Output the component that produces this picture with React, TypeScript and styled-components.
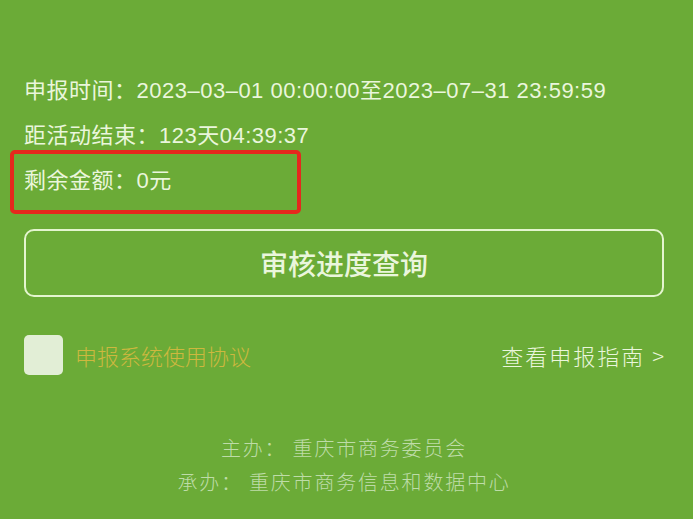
import React from "react";
import styled, {createGlobalStyle} from "styled-components";

const GlobalStyle = createGlobalStyle`
  html, body {
    margin: 0;
    padding: 0;
    background: #6bab37;
  }
  body {
    font-family: "Liberation Sans", "Noto Sans CJK SC", sans-serif;
  }
`;

const Page = styled.div`
  width: 693px;
  height: 519px;
  box-sizing: border-box;
  background: #6bab37;
  padding: 76px 29px 0 24px;
  display: flex;
  flex-direction: column;
  position: relative;
  overflow: hidden;
`;

const InfoList = styled.div`
  display: flex;
  flex-direction: column;
  gap: 15px;
`;

const InfoLine = styled.div`
  color: #eaf6dc;
  font-size: 22px;
  line-height: 30px;
  white-space: nowrap;
  letter-spacing: 0.5px;
`;

const Highlight = styled.div`
  position: absolute;
  left: 10px;
  top: 150px;
  width: 291px;
  height: 64px;
  box-sizing: border-box;
  border: 4px solid #e5281d;
  border-radius: 5px;
`;

const QueryButton = styled.button`
  margin-top: 33px;
  height: 68px;
  width: 640px;
  box-sizing: border-box;
  background: transparent;
  border: 2px solid #e4f5cf;
  border-radius: 10px;
  color: #eaf6dc;
  font-family: "Noto Sans CJK SC", sans-serif;
  font-size: 28px;
  font-weight: 500;
  padding: 0;
`;

const AgreementRow = styled.div`
  margin-top: 38px;
  display: flex;
  align-items: center;
  justify-content: space-between;
  width: 640px;
`;

const Agree = styled.label`
  display: flex;
  align-items: center;
  gap: 12px;
`;

const Box = styled.span`
  width: 39px;
  height: 40px;
  border-radius: 5px;
  background: #e2eed6;
`;

const AgreeText = styled.span`
  color: #cdb83f;
  font-family: "Noto Sans CJK SC", sans-serif;
  font-size: 22px;
  font-weight: 300;
`;

const GuideLink = styled.span`
  color: #eaf6dc;
  font-size: 22px;
  font-weight: 300;
  font-family: "Noto Sans CJK SC", sans-serif;
  letter-spacing: 2px;
  margin-right: -2px;
`;

const Footer = styled.div`
  margin-top: 56px;
  display: flex;
  flex-direction: column;
  align-items: center;
  width: 640px;
  color: #bedca8;
  font-family: "Noto Sans CJK SC", sans-serif;
  font-size: 20px;
  font-weight: 300;
  line-height: 34px;
  letter-spacing: 1.8px;
`;

export default function App() {
  return (
    <>
      <GlobalStyle />
      <Page>
        <InfoList>
          <InfoLine>申报时间：2023–03–01 00:00:00至2023–07–31 23:59:59</InfoLine>
          <InfoLine>距活动结束：123天04:39:37</InfoLine>
          <InfoLine>剩余金额：0元</InfoLine>
        </InfoList>
        <Highlight />
        <QueryButton>审核进度查询</QueryButton>
        <AgreementRow>
          <Agree>
            <Box />
            <AgreeText>申报系统使用协议</AgreeText>
          </Agree>
          <GuideLink>查看申报指南 &gt;</GuideLink>
        </AgreementRow>
        <Footer>
          <div>主办：&nbsp;重庆市商务委员会</div>
          <div>承办：&nbsp;重庆市商务信息和数据中心</div>
        </Footer>
      </Page>
    </>
  );
}
